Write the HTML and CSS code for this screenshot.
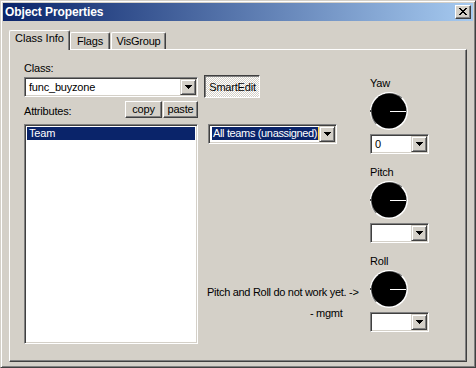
FILE: index.html
```html
<!DOCTYPE html>
<html lang="en">
<head>
    <meta charset="UTF-8">
    <meta name="viewport" content="width=device-width, initial-scale=1.0">
    <title>Object Properties</title>
    <link rel="stylesheet" href="styles.css">
</head>
<body>

    <div class="window">
        <div class="titlebar">
            <span class="title">Object Properties</span>
            <span class="close-btn">
                <svg width="8" height="7" viewBox="0 0 8 7" shape-rendering="crispEdges"><path d="M0 0h2v1h1v1h2V1h1V0h2v1H7v1H6v1H5v1h1v1h1v1h1v1H6V6H5V5H3v1H2v1H0V6h1V5h1V4h1V3H2V2H1V1H0z" fill="#000"/></svg>
            </span>
        </div>

        <div class="dialog">
            <div class="tabs">
                <div class="tab active">Class Info</div>
                <div class="tab flags">Flags</div>
                <div class="tab visgroup">VisGroup</div>
            </div>

            <div class="panel">
                <!-- class + attribute list -->
                <div class="col-left">
                    <div class="label class-label">Class:</div>
                    <div class="combo class-combo">
                        <span class="combo-value">func_buyzone</span>
                        <span class="drop"><svg width="7" height="4" shape-rendering="crispEdges"><path d="M0 0h7v1H0zM1 1h5v1H1zM2 2h3v1H2zM3 3h1v1H3z"/></svg></span>
                    </div>
                    <div class="attr-row">
                        <span class="label">Attributes:</span>
                        <div class="btn-pair">
                            <span class="btn copy">copy</span>
                            <span class="btn paste">paste</span>
                        </div>
                    </div>
                    <div class="listbox">
                        <div class="list-item selected">Team</div>
                    </div>
                </div>

                <!-- smartedit value -->
                <div class="col-mid">
                    <div class="toggle-btn">SmartEdit</div>
                    <div class="combo team-combo">
                        <span class="combo-value"><span class="highlight">All teams (unassigned)</span></span>
                        <span class="drop"><svg width="7" height="4" shape-rendering="crispEdges"><path d="M0 0h7v1H0zM1 1h5v1H1zM2 2h3v1H2zM3 3h1v1H3z"/></svg></span>
                    </div>
                    <div class="note">Pitch and Roll do not work yet. -&gt;</div>
                    <div class="note sign">- mgmt</div>
                </div>

                <!-- angle dials -->
                <div class="col-right">
                    <div class="dial-group yaw">
                        <div class="label">Yaw</div>
                        <svg class="dial" width="38" height="38" viewBox="0 0 38 38">
                            <circle cx="19" cy="19" r="19" fill="#fff"/>
                            <path d="M5.6 32.4 A19 19 0 0 1 32.4 5.6 Z" fill="#808080"/>
                            <circle cx="19" cy="19" r="17.5" fill="#000"/>
                            <rect x="0" y="18" width="1" height="2" fill="#404040"/>
                            <rect x="20" y="19" width="16" height="1" fill="#fff"/>
                        </svg>
                        <div class="combo small-combo">
                            <span class="combo-value">0</span>
                            <span class="drop"><svg width="7" height="4" shape-rendering="crispEdges"><path d="M0 0h7v1H0zM1 1h5v1H1zM2 2h3v1H2zM3 3h1v1H3z"/></svg></span>
                        </div>
                    </div>
                    <div class="dial-group pitch">
                        <div class="label">Pitch</div>
                        <svg class="dial" width="38" height="38" viewBox="0 0 38 38">
                            <circle cx="19" cy="19" r="19" fill="#fff"/>
                            <path d="M5.6 32.4 A19 19 0 0 1 32.4 5.6 Z" fill="#808080"/>
                            <circle cx="19" cy="19" r="17.5" fill="#000"/>
                            <rect x="0" y="18" width="1" height="2" fill="#404040"/>
                            <rect x="20" y="19" width="16" height="1" fill="#fff"/>
                        </svg>
                        <div class="combo small-combo">
                            <span class="combo-value"></span>
                            <span class="drop"><svg width="7" height="4" shape-rendering="crispEdges"><path d="M0 0h7v1H0zM1 1h5v1H1zM2 2h3v1H2zM3 3h1v1H3z"/></svg></span>
                        </div>
                    </div>
                    <div class="dial-group roll">
                        <div class="label">Roll</div>
                        <svg class="dial" width="38" height="38" viewBox="0 0 38 38">
                            <circle cx="19" cy="19" r="19" fill="#fff"/>
                            <path d="M5.6 32.4 A19 19 0 0 1 32.4 5.6 Z" fill="#808080"/>
                            <circle cx="19" cy="19" r="17.5" fill="#000"/>
                            <rect x="0" y="18" width="1" height="2" fill="#404040"/>
                            <rect x="20" y="19" width="16" height="1" fill="#fff"/>
                        </svg>
                        <div class="combo small-combo">
                            <span class="combo-value"></span>
                            <span class="drop"><svg width="7" height="4" shape-rendering="crispEdges"><path d="M0 0h7v1H0zM1 1h5v1H1zM2 2h3v1H2zM3 3h1v1H3z"/></svg></span>
                        </div>
                    </div>
                </div>
            </div>
        </div>
    </div>

</body>
</html>
```

FILE: styles.css
```css
body {
    margin: 0;
    font-family: "Liberation Sans", Arial, sans-serif;
    font-size: 11px;
    line-height: 13px;
    letter-spacing: -0.2px;
    color: #000;
    background: #d4d0c8;
}

.window {
    width: 476px;
    height: 368px;
    box-sizing: border-box;
    border: 1px solid;
    border-color: #d4d0c8 #404040 #404040 #d4d0c8;
    box-shadow: inset 1px 1px #fff, inset -1px -1px #808080;
    padding: 2px;
    background: #d4d0c8;
}

/* title bar */
.titlebar {
    height: 18px;
    display: flex;
    align-items: center;
    justify-content: space-between;
    padding: 0 2px;
    background: linear-gradient(to right, #0a246a, #a6caf0);
}

.title {
    color: #fff;
    font-weight: bold;
    font-size: 12px;
    letter-spacing: -0.1px;
}

.close-btn {
    width: 16px;
    height: 14px;
    box-sizing: border-box;
    display: flex;
    align-items: center;
    justify-content: center;
    background: #d4d0c8;
    border: 1px solid;
    border-color: #fff #404040 #404040 #fff;
    box-shadow: inset -1px -1px #808080;
    padding: 0 1px 1px 0;
}

/* tabs */
.dialog {
    padding: 9px 6px 0 6px;
}

.tabs {
    display: flex;
    align-items: flex-end;
    height: 19px;
}

.tab {
    box-sizing: border-box;
    height: 17px;
    padding-top: 2px;
    text-align: center;
    border-top: 1px solid #fff;
    border-left: 1px solid #fff;
    border-right: 1px solid #404040;
    box-shadow: inset -1px 0 #808080;
    border-top-left-radius: 2px;
    border-top-right-radius: 2px;
}

.tab.active {
    width: 61px;
    height: 20px;
    padding-top: 1px;
    margin-bottom: -1px;
    position: relative;
    z-index: 1;
    background: #d4d0c8;
    letter-spacing: 0;
}

.tab.flags {
    width: 40px;
}

.tab.visgroup {
    width: 55px;
    margin-left: 1px;
}

.panel {
    height: 313px;
    box-sizing: border-box;
    border: 1px solid;
    border-color: #fff #404040 #404040 #fff;
    box-shadow: inset -1px -1px #808080;
    display: flex;
    padding-left: 14px;
}

/* shared controls */
.combo {
    height: 20px;
    box-sizing: border-box;
    display: flex;
    background: #fff;
    border: 1px solid;
    border-color: #808080 #fff #fff #808080;
    box-shadow: inset 1px 1px #404040, inset -1px -1px #d4d0c8;
    padding: 2px;
}

.combo-value {
    flex: 1;
    padding-left: 2px;
    line-height: 14px;
    white-space: nowrap;
    overflow: hidden;
}

.drop {
    width: 16px;
    height: 16px;
    margin: -1px -1px -1px 0;
    box-sizing: border-box;
    display: flex;
    align-items: center;
    justify-content: center;
    padding: 0 0 1px 1px;
    background: #d4d0c8;
    border: 1px solid;
    border-color: #d4d0c8 #404040 #404040 #d4d0c8;
    box-shadow: inset 1px 1px #fff, inset -1px -1px #808080;
}

.btn {
    height: 17px;
    box-sizing: border-box;
    display: inline-flex;
    align-items: center;
    justify-content: center;
    background: #d4d0c8;
    border: 1px solid;
    border-color: #fff #404040 #404040 #fff;
    box-shadow: inset -1px -1px #808080;
    padding-bottom: 1px;
}

/* left column */
.col-left {
    width: 174px;
    display: flex;
    flex-direction: column;
}

.class-label {
    margin-top: 12px;
}

.class-combo {
    margin-top: 2px;
}

.attr-row {
    display: flex;
    justify-content: space-between;
    align-items: flex-end;
    margin-top: 4px;
}

.btn-pair {
    display: flex;
    gap: 1px;
}

.btn.copy {
    width: 37px;
}

.btn.paste {
    width: 35px;
}

.listbox {
    margin-top: 6px;
    height: 220px;
    box-sizing: border-box;
    background: #fff;
    border: 1px solid;
    border-color: #808080 #fff #fff #808080;
    box-shadow: inset 1px 1px #404040, inset -1px -1px #d4d0c8;
    padding: 2px 2px 0 2px;
}

.list-item {
    height: 13px;
    padding-left: 2px;
}

.list-item.selected,
.highlight {
    background: #0a246a;
    color: #fff;
}

/* middle column */
.col-mid {
    width: 166px;
    margin-left: 6px;
    display: flex;
    flex-direction: column;
    align-items: flex-start;
}

.toggle-btn {
    margin-top: 25px;
    width: 56px;
    height: 23px;
    box-sizing: border-box;
    display: flex;
    align-items: center;
    justify-content: center;
    padding: 1px 0 0 1px;
    border: 1px solid;
    border-color: #404040 #fff #fff #404040;
    box-shadow: inset 1px 1px #808080;
    background-color: #fff;
    background-image: conic-gradient(#fff 25%, #d4d0c8 0 50%, #fff 0 75%, #d4d0c8 0);
    background-size: 2px 2px;
}

.team-combo {
    margin-top: 26px;
    margin-left: 4px;
    width: 129px;
}

.team-combo .combo-value {
    padding-left: 1px;
}

.highlight {
    display: block;
    height: 13px;
    padding-left: 1px;
    line-height: 13px;
    letter-spacing: -0.35px;
    border-right: 1px solid #ffd94a;
}

.note {
    margin-top: 142px;
    margin-left: 3px;
    white-space: nowrap;
    letter-spacing: -0.3px;
}

.note.sign {
    margin-top: 8px;
    margin-left: 106px;
}

/* right column */
.col-right {
    width: 59px;
    display: flex;
    flex-direction: column;
}

.dial-group {
    display: flex;
    flex-direction: column;
    align-items: flex-start;
}

.dial-group.yaw {
    margin-top: 27px;
}

.dial-group.pitch,
.dial-group.roll {
    margin-top: 12px;
}

.dial {
    display: block;
    margin-top: 2px;
}

.small-combo {
    width: 59px;
    margin-top: 4px;
}
```
